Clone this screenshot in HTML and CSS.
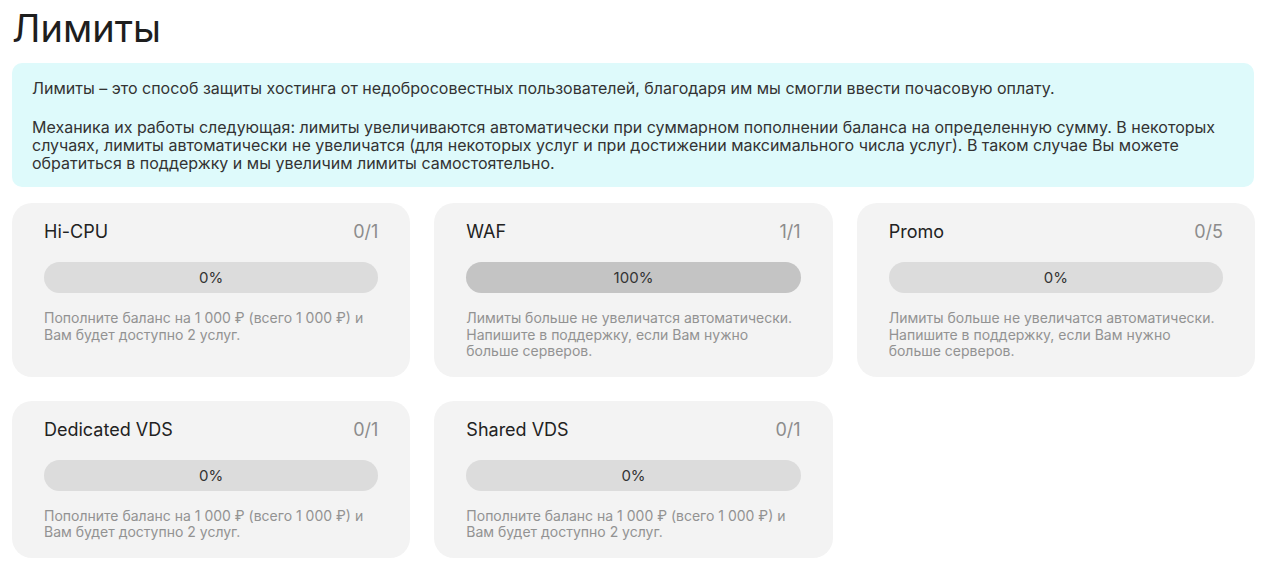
FILE: index.html
```html
<!DOCTYPE html>
<html lang="ru">
<head>
<meta charset="utf-8">
<title>Лимиты</title>
<link rel="stylesheet" href="styles.css">
</head>
<body>
<main class="page">
  <h1 class="title">Лимиты</h1>
  <section class="info">
    <p>Лимиты – это способ защиты хостинга от недобросовестных пользователей, благодаря им мы смогли ввести почасовую оплату.</p>
    <p>Механика их работы следующая: лимиты увеличиваются автоматически при суммарном пополнении баланса на определенную сумму. В некоторых случаях, лимиты автоматически не увеличатся (для некоторых услуг и при достижении максимального числа услуг). В таком случае Вы можете обратиться в поддержку и мы увеличим лимиты самостоятельно.</p>
  </section>
  <section class="grid">
    <div class="card">
      <div class="card-head"><span class="name">Hi-CPU</span><span class="count">0/1</span></div>
      <div class="bar">0%</div>
      <p class="desc">Пополните баланс на 1 000 ₽ (всего 1 000 ₽) и Вам будет доступно 2 услуг.</p>
    </div>
    <div class="card">
      <div class="card-head"><span class="name">WAF</span><span class="count">1/1</span></div>
      <div class="bar bar-full">100%</div>
      <p class="desc">Лимиты больше не увеличатся автоматически. Напишите в поддержку, если Вам нужно больше серверов.</p>
    </div>
    <div class="card">
      <div class="card-head"><span class="name">Promo</span><span class="count">0/5</span></div>
      <div class="bar">0%</div>
      <p class="desc">Лимиты больше не увеличатся автоматически. Напишите в поддержку, если Вам нужно больше серверов.</p>
    </div>
    <div class="card">
      <div class="card-head"><span class="name">Dedicated VDS</span><span class="count">0/1</span></div>
      <div class="bar">0%</div>
      <p class="desc">Пополните баланс на 1 000 ₽ (всего 1 000 ₽) и Вам будет доступно 2 услуг.</p>
    </div>
    <div class="card">
      <div class="card-head"><span class="name">Shared VDS</span><span class="count">0/1</span></div>
      <div class="bar">0%</div>
      <p class="desc">Пополните баланс на 1 000 ₽ (всего 1 000 ₽) и Вам будет доступно 2 услуг.</p>
    </div>
  </section>
</main>
</body>
</html>
```
FILE: styles.css
```css
* { box-sizing: border-box; }
html, body { margin: 0; padding: 0; background: #fff; }
body {
  font-family: Inter, "Noto Sans", sans-serif;
  color: #222;
}
.page {
  padding: 0 12px 12px 12px;
}
.title {
  margin: 0;
  padding-top: 4px;
  font-size: 38px;
  line-height: 48px;
  font-weight: 400;
  color: #1e1e1e;
}
.info {
  margin-top: 11px;
  background: #defafb;
  border-radius: 10px;
  padding: 16px 20px 15px;
  font-size: 16px;
  line-height: 18px;
  color: #333;
}
.info p { margin: 0; }
.info p + p { margin-top: 21px; }
.grid {
  margin-top: 16px;
  display: grid;
  grid-template-columns: repeat(3, 1fr);
  gap: 24px;
  width: 1243px;
}
.card {
  background: #f3f3f3;
  border-radius: 20px;
  padding: 18px 32px 17px;
}
.card-head {
  display: flex;
  justify-content: space-between;
  align-items: baseline;
  font-size: 18px;
  line-height: 22px;
}
.name { color: #222; }
.count { color: #8c8c8c; }
.bar {
  margin-top: 19px;
  height: 31px;
  border-radius: 16px;
  background: #dcdcdc;
  display: flex;
  align-items: center;
  justify-content: center;
  font-size: 15px;
  color: #333;
}
.bar-full { background: #c4c4c4; }
.desc {
  margin: 17px 0 0;
  font-size: 14px;
  line-height: 16.5px;
  color: #929292;
}
```
